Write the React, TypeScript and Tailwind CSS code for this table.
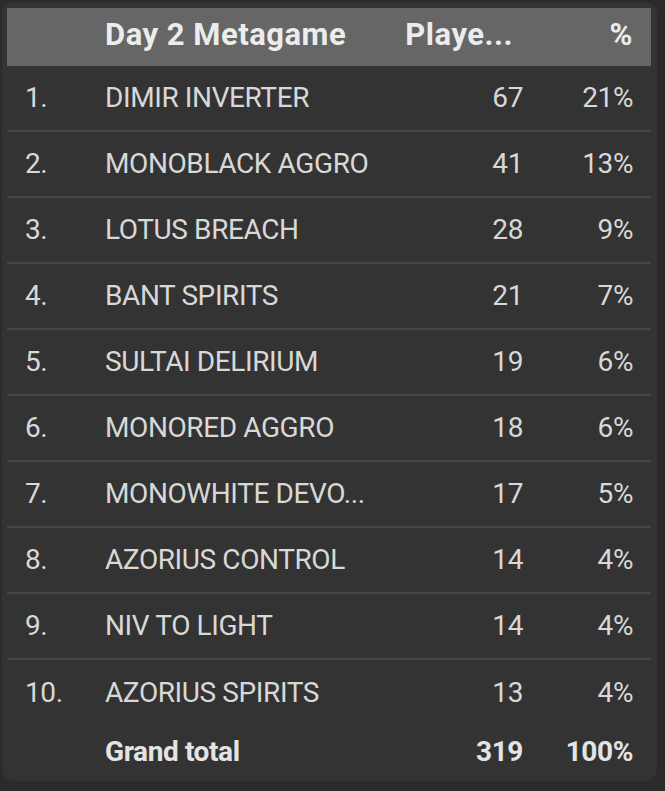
const rows: [string, number, string][] = [
  ["DIMIR INVERTER", 67, "21%"],
  ["MONOBLACK AGGRO", 41, "13%"],
  ["LOTUS BREACH", 28, "9%"],
  ["BANT SPIRITS", 21, "7%"],
  ["SULTAI DELIRIUM", 19, "6%"],
  ["MONORED AGGRO", 18, "6%"],
  ["MONOWHITE DEVO...", 17, "5%"],
  ["AZORIUS CONTROL", 14, "4%"],
  ["NIV TO LIGHT", 14, "4%"],
  ["AZORIUS SPIRITS", 13, "4%"],
];

const cols = "grid grid-cols-[80px_1fr_120px_110px] items-center px-[18px]";

const App = () => {
  return (
    <div
      className="w-[665px] h-[791px] bg-[#2b2b2b] pt-[2px] pl-[2px] overflow-hidden"
      style={{ fontFamily: "Roboto, 'Liberation Sans', sans-serif" }}
    >
      <div className="w-[655px] h-[779px] rounded-xl bg-[#333333] pt-[6px] pl-[5px] pr-[6px]">
        {/* Header */}
        <div className={`${cols} h-[58px] pb-[3px] bg-[#666666] text-[31px] font-bold text-[#ececec] tracking-[0.5px]`}>
          <span />
          <span>Day 2 Metagame</span>
          <span className="text-right pr-[10px]">Playe...</span>
          <span className="text-right">%</span>
        </div>

        {/* Rows */}
        {rows.map(([name, players, pct], i) => (
          <div
            key={name}
            className={`${cols} h-[66px] text-[28px] text-[#d8d8d8] tracking-[-0.4px] ${
              i < rows.length - 1 ? "border-b-2 border-[#474747]" : ""
            }`}
          >
            <span>{i + 1}.</span>
            <span className="whitespace-nowrap">{name}</span>
            <span className="text-right">{players}</span>
            <span className="text-right">{pct}</span>
          </div>
        ))}

        {/* Total */}
        <div className={`${cols} h-[52px] text-[28px] font-bold text-[#e4e4e4] tracking-[-0.4px]`}>
          <span />
          <span>Grand total</span>
          <span className="text-right">319</span>
          <span className="text-right">100%</span>
        </div>
      </div>
    </div>
  );
};

export default App;
